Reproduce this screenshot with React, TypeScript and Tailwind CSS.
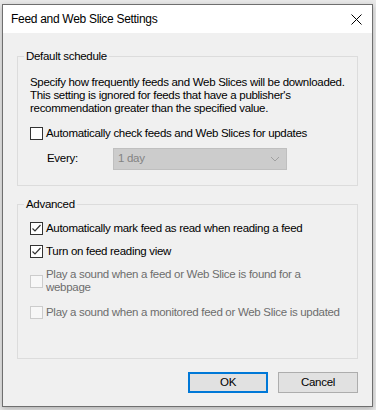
import { ReactNode } from "react";

const FONT = {
  fontFamily: '"Segoe UI", "Liberation Sans", Arial, sans-serif',
  letterSpacing: "-0.3px",
};

function CheckBox({
  checked = false,
  disabled = false,
}: {
  checked?: boolean;
  disabled?: boolean;
}) {
  return (
    <span
      className={`flex h-[13px] w-[13px] shrink-0 items-center justify-center border ${
        disabled ? "border-[#cccccc] bg-[#f7f7f7]" : "border-[#333333] bg-white"
      }`}
    >
      {checked && (
        <svg width="11" height="11" viewBox="0 0 11 11">
          <path d="M1.5 5.5 L4 8 L9.5 2" fill="none" stroke="#333333" strokeWidth="1.2" />
        </svg>
      )}
    </span>
  );
}

function Option({
  label,
  checked,
  disabled,
}: {
  label: ReactNode;
  checked?: boolean;
  disabled?: boolean;
}) {
  return (
    <label className={`flex items-center gap-[3px] whitespace-nowrap ${disabled ? "text-[#6d6d6d]" : "text-black"}`}>
      <CheckBox checked={checked} disabled={disabled} />
      <span className="leading-[13px]">{label}</span>
    </label>
  );
}

function Group({ title, children, className = "" }: { title: string; children: ReactNode; className?: string }) {
  return (
    <fieldset className="border border-[#dcdcdc] px-[6px]">
      <legend className="px-[2px] leading-[14px]">{title}</legend>
      <div className={`px-[6px] ${className}`}>{children}</div>
    </fieldset>
  );
}

export default function App() {
  return (
    <div className="h-[410px] w-[376px] overflow-hidden bg-[#e9e9e9] pl-[2px] pt-[4px] text-[11.5px]" style={FONT}>
      <div className="flex h-[403px] w-[371px] flex-col border border-[#6f6f6f] bg-[#f0f0f0] shadow-[0_2px_6px_rgba(0,0,0,0.25)]">
        <div className="flex h-[28px] shrink-0 items-center justify-between bg-white pl-[8px] pr-[10px]">
          <span className="text-[12px] text-black">Feed and Web Slice Settings</span>
          <svg width="11" height="11" viewBox="0 0 11 11">
            <path d="M0.5 0.5 L10.5 10.5 M10.5 0.5 L0.5 10.5" stroke="#000" strokeWidth="1" />
          </svg>
        </div>

        <div className="flex flex-1 flex-col px-[14px] pt-[16px]">
          <Group title="Default schedule" className="pb-[15px]">
            <p className="mt-[13px] whitespace-nowrap leading-[13px] text-black">
              Specify how frequently feeds and Web Slices will be downloaded.
              <br />
              This setting is ignored for feeds that have a publisher&apos;s
              <br />
              recommendation greater than the specified value.
            </p>
            <div className="mt-[12px]">
              <Option label="Automatically check feeds and Web Slices for updates" />
            </div>
            <div className="mt-[8px] flex items-center">
              <span className="ml-[17px] w-[66px] text-black">Every:</span>
              <div className="flex h-[22px] w-[174px] items-center justify-between border border-[#bfbfbf] bg-[#cccccc] pl-[4px] pr-[6px] text-[#838383]">
                <span>1 day</span>
                <svg width="10" height="6" viewBox="0 0 10 6">
                  <path d="M1 1 L5 5 L9 1" fill="none" stroke="#a0a0a0" strokeWidth="1" />
                </svg>
              </div>
            </div>
          </Group>

          <div className="mt-[11px]">
            <Group title="Advanced" className="flex flex-col pb-[39px]">
              <div className="mt-[11px]">
                <Option checked label="Automatically mark feed as read when reading a feed" />
              </div>
              <div className="mt-[10px]">
                <Option checked label="Turn on feed reading view" />
              </div>
              <div className="mt-[10px]">
                <Option
                  disabled
                  label={
                    <>
                      Play a sound when a feed or Web Slice is found for a
                      <br />
                      webpage
                    </>
                  }
                />
              </div>
              <div className="mt-[12px]">
                <Option disabled label="Play a sound when a monitored feed or Web Slice is updated" />
              </div>
            </Group>
          </div>

          <div className="mt-[13px] flex justify-end gap-[10px]">
            <button className="h-[21px] w-[80px] border-2 border-[#0078d7] bg-[#e1e1e1] text-black">OK</button>
            <button className="h-[21px] w-[80px] border border-[#adadad] bg-[#e1e1e1] text-black">Cancel</button>
          </div>
        </div>
      </div>
    </div>
  );
}
